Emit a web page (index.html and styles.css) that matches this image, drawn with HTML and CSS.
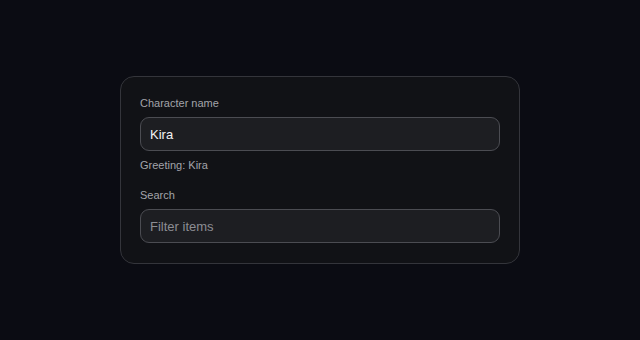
FILE: index.html
```html
<!DOCTYPE html>
<html lang="en">

<head>
  <meta charset="UTF-8">
  <meta name="viewport" content="width=device-width, initial-scale=1.0">
  <title>Character</title>
  <link rel="stylesheet" href="styles.css">
</head>

<body>
  <div class="page">
    <form class="card">
      <label class="field-label" for="char-name">Character name</label>
      <input class="text-input" type="text" id="char-name" value="Kira">
      <p class="greeting">Greeting: Kira</p>

      <label class="field-label search-label" for="search">Search</label>
      <input class="text-input" type="text" id="search" placeholder="Filter items">
    </form>
  </div>
</body>

</html>
```

FILE: styles.css
```css
html,
body {
  margin: 0;
  height: 100%;
}

body {
  background-color: #0b0c13;
  font-family: 'Liberation Sans', arial, sans-serif;
  font-size: 11px;
}

.page {
  height: 100%;
  display: flex;
  align-items: center;
  justify-content: center;
}

.card {
  width: 360px;
  padding: 19px 19px 20px;
  border: 1px solid #34353b;
  border-radius: 14px;
  background-color: #111216;
  display: flex;
  flex-direction: column;
}

.field-label {
  display: block;
  color: #a3a4aa;
  line-height: 14px;
  margin-bottom: 7px;
}

.search-label {
  margin-top: 16px;
}

.text-input {
  height: 34px;
  box-sizing: border-box;
  padding: 0 9px;
  border: 1px solid #4b4c52;
  border-radius: 9px;
  background-color: #1d1e22;
  color: #f2f2f4;
  font-family: inherit;
  font-size: 13px;
  outline: none;
}

.text-input::placeholder {
  color: #8c8d93;
}

.greeting {
  margin: 7px 0 0;
  color: #a3a4aa;
  line-height: 14px;
}
```
